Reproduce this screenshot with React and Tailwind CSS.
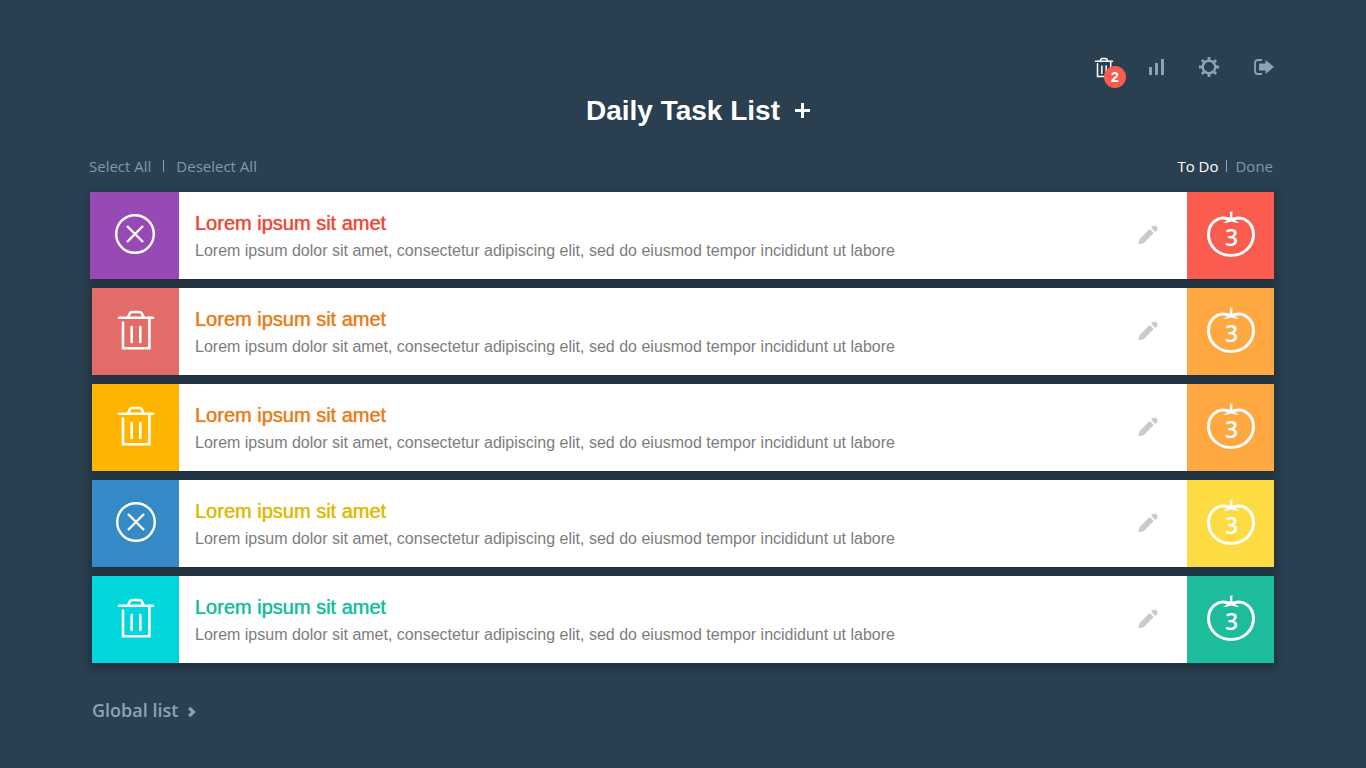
import React, { useState } from 'react';

const DESCRIPTION =
  'Lorem ipsum dolor sit amet, consectetur adipiscing elit, sed do eiusmod tempor incididunt ut labore';

const TASKS = [
  { id: 1, icon: 'cross', action: '-ml-[2px] w-[89px] bg-[#974ab6]', title: 'text-[#e94b3c]', count: 'bg-[#fa5d4f]' },
  { id: 2, icon: 'trash', action: 'w-[87px] bg-[#e26c67]', title: 'text-[#e67e22]', count: 'bg-[#ffa842]' },
  { id: 3, icon: 'trash', action: 'w-[87px] bg-[#ffb400]', title: 'text-[#e67e22]', count: 'bg-[#ffa842]' },
  { id: 4, icon: 'cross', action: 'w-[87px] bg-[#368bc6]', title: 'text-[#dcb90a]', count: 'bg-[#fddc43]' },
  { id: 5, icon: 'trash', action: 'w-[87px] bg-[#00d6dc]', title: 'text-[#1bbc9b]', count: 'bg-[#1cbc9c]' },
];

function TrashIcon({ className, strokeWidth = 2.6 }) {
  return (
    <svg viewBox="0 0 40 42" className={className} fill="none" stroke="currentColor" strokeWidth={strokeWidth} strokeLinecap="round" aria-hidden="true">
      <path d="M3 8.7H37M12 8L14 4.2Q14.6 3 16 3H23.500Q25 3 25.600 4.200L27.500 8" />
      <path d="M7 13.500V39.200H33.400V9" strokeLinejoin="miter" />
      <path d="M15.700 18V33M24.300 18V33" />
    </svg>
  );
}

function CrossIcon() {
  return (
    <svg viewBox="0 0 40 40" className="size-10" fill="none" stroke="currentColor" strokeWidth="2.400" aria-hidden="true">
      <circle cx="20" cy="20" r="18.800" />
      <path d="M12 12L28 28M28 12L12 28" />
    </svg>
  );
}

function TomatoIcon() {
  return (
    <svg viewBox="0 0 48 46" className="h-[46px] w-12" fill="none" aria-hidden="true">
      <path
        d="M24 8.800C19 6.600 14 6.400 10.500 8.300C4.500 11.500 1.500 17.500 1.500 23.500C1.500 35.500 11.500 44.500 24 44.500S46.500 35.500 46.500 23.500C46.500 17.500 43.500 11.500 37.500 8.300C34 6.400 29 6.600 24 8.800Z"
        stroke="currentColor"
        strokeWidth="3"
      />
      <path
        d="M22.800 1L25.600 0.300Q25 3 25.500 7L28.500 9.500L32.500 12Q27.500 12.200 24.200 10.300Q21 12.200 16 12L20 9.500L22.800 7Q23.300 4 22.800 1Z"
        fill="currentColor"
      />
    </svg>
  );
}

function PencilIcon() {
  return (
    <svg viewBox="0 0 20 20" className="size-5" fill="currentColor" aria-hidden="true">
      <path d="M0.300 19.600L1.600 13.900L11.600 3.900L15.700 8L6 17.900Z" />
      <path d="M13 2.800L14.800 1Q16.600 -0.300 18.500 1.500Q20.300 3.400 19 5.200L17.200 7Z" />
    </svg>
  );
}

function BarsIcon() {
  return (
    <svg viewBox="0 0 16 16" className="size-4" fill="currentColor" aria-hidden="true">
      <path d="M0 8H3V16H0ZM6 4H9V16H6ZM12 0H15V16H12Z" />
    </svg>
  );
}

function GearIcon() {
  return (
    <svg viewBox="0 0 20 20" className="size-5" fill="none" stroke="currentColor" aria-hidden="true">
      <circle cx="10" cy="10" r="6.300" strokeWidth="2.400" />
      <path
        d="M10 0V3.500M10 16.500V20M0 10H3.500M16.500 10H20M2.930 2.930L5.400 5.400M14.600 14.600L17.070 17.070M2.930 17.070L5.400 14.600M14.600 5.400L17.070 2.930"
        strokeWidth="2.800"
      />
    </svg>
  );
}

function ExitIcon() {
  return (
    <svg viewBox="0 0 20 16" className="h-4 w-5" aria-hidden="true">
      <path d="M8 1H4Q1 1 1 4V12Q1 15 4 15H8" fill="none" stroke="currentColor" strokeWidth="1.800" />
      <path d="M5 4.500H11.500V1L20 8L11.500 15V11.500H5Z" fill="currentColor" />
    </svg>
  );
}

function TaskCard({ task }) {
  return (
    <li className="flex h-[87px] bg-white shadow-[0_3px_8px_3px_rgba(0,0,0,0.22)]">
      <button
        type="button"
        aria-label={task.icon === 'trash' ? 'Delete task' : 'Cancel task'}
        className={`flex shrink-0 items-center justify-center pb-1 text-white ${task.action}`}
      >
        {task.icon === 'trash' ? <TrashIcon className="h-[42px] w-10" /> : <CrossIcon />}
      </button>
      <div className="min-w-0 flex-1 px-4 pt-[18px]">
        <h2 className={`text-[20px] leading-[26px] [text-shadow:0_0_1px_currentColor] ${task.title}`}>Lorem ipsum sit amet</h2>
        <p className="mt-1 truncate text-[16px] leading-[22px] text-[#7d7d7d]">{DESCRIPTION}</p>
      </div>
      <button type="button" aria-label="Edit task" className="mr-[29px] flex shrink-0 items-center pb-0.5 text-[#cacaca]">
        <PencilIcon />
      </button>
      <div className={`grid w-[87px] shrink-0 place-items-center pb-1 text-white ${task.count}`}>
        <div className="relative">
          <TomatoIcon />
          <span className="absolute inset-x-0 top-3 pl-0.5 text-center font-['Open_Sans',sans-serif] text-[23px] leading-7 font-semibold">3</span>
        </div>
      </div>
    </li>
  );
}

export default function App() {
  const [view, setView] = useState('todo');
  const tab = (name) => (view === name ? 'text-white' : 'text-[#8099ad]');
  return (
    <div className="min-h-screen bg-[#2a3f50] font-['Liberation_Sans',Arial,sans-serif]">
      <nav className="flex h-[79px] items-end justify-end pr-[92px] text-[#8ba3b8]">
        <button type="button" aria-label="Trash" className="relative mr-[35px] mb-px text-white">
          <TrashIcon className="h-[21px] w-5" strokeWidth={3} />
          <span className="absolute top-[9px] left-2.5 grid size-[22px] place-items-center rounded-full bg-[#fa5d4f] text-[14px] leading-none font-bold">2</span>
        </button>
        <button type="button" aria-label="Statistics" className="mr-[34px] mb-1"><BarsIcon /></button>
        <button type="button" aria-label="Settings" className="mr-[35px] mb-0.5"><GearIcon /></button>
        <button type="button" aria-label="Log out" className="mb-1"><ExitIcon /></button>
      </nav>

      <header className="mt-3.5 grid grid-cols-[1fr_auto_1fr] items-center">
        <h1 className="col-start-2 text-[28px] leading-9 font-bold text-white">Daily Task List</h1>
        <button type="button" aria-label="Add task" className="ml-[15px] w-fit pb-0.5 text-white">
          <svg viewBox="0 0 15 15" className="size-[15px]" fill="currentColor" aria-hidden="true">
            <path d="M6 0H9V6H15V9H9V15H6V9H0V6H6Z" />
          </svg>
        </button>
      </header>

      <div className="mt-[25px] flex h-6 items-center justify-between pr-[93px] pl-[89px] font-['Open_Sans',sans-serif] text-[15px] text-[#8099ad]">
        <div className="flex items-center gap-3">
          <button type="button">Select All</button>
          <span className="h-3 w-px bg-[#8ba3b8]" />
          <button type="button">Deselect All</button>
        </div>
        <div className="flex items-center gap-2">
          <button type="button" className={tab('todo')} onClick={() => setView('todo')}>To Do</button>
          <span className="h-3 w-px bg-[#8ba3b8]" />
          <button type="button" className={tab('done')} onClick={() => setView('done')}>Done</button>
        </div>
      </div>

      <ul className="mt-3.5 flex flex-col gap-[9px] px-[92px]">
        {TASKS.map((task) => (
          <TaskCard key={task.id} task={task} />
        ))}
      </ul>

      <a href="#global" className="mt-[33px] ml-[92px] flex w-fit items-center gap-2.5 font-['Open_Sans',sans-serif] text-[18px] leading-7 font-semibold text-[#8ba3b8]">
        Global list
        <svg viewBox="0 0 8 12" className="mt-1 h-3 w-2" fill="none" stroke="currentColor" strokeWidth="3.200" aria-hidden="true">
          <path d="M1.200 1.800L5.400 6L1.200 10.200" />
        </svg>
      </a>
    </div>
  );
}
